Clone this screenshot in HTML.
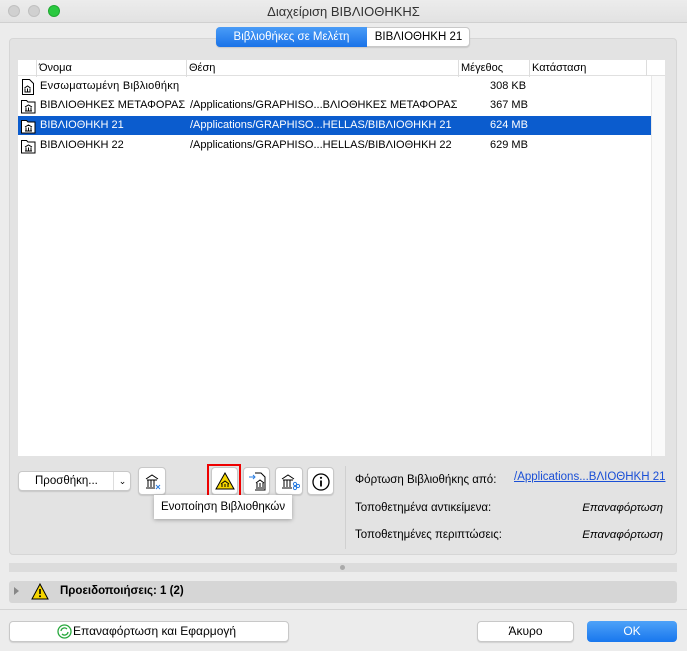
<!DOCTYPE html>
<html><head><meta charset="utf-8"><style>
*{box-sizing:border-box;margin:0;padding:0}
body{width:687px;height:651px;overflow:hidden;background:#ececec;font-family:"Liberation Sans","Noto Sans CJK JP",sans-serif;font-size:11.5px;color:#000;position:relative}
.a{position:absolute}
.btn{position:absolute;background:#fff;border:1px solid #c8c8c8;border-radius:4px;box-shadow:0 1px 1px rgba(0,0,0,.12)}
.row{position:absolute;left:18px;width:633px;height:19px;line-height:19px;font-size:11px}
.row span{position:absolute;white-space:nowrap}
.ic{position:absolute;left:3px;top:2px}
</style></head><body>
<div class="a" style="left:0;top:0;width:687px;height:23px;background:linear-gradient(#ececec,#e2e2e2);border-bottom:1px solid #d0d0d0"></div>
<div class="a" style="left:8px;top:5px;width:12px;height:12px;border-radius:6px;background:#d0d0d0;border:1px solid #c0c0c0"></div>
<div class="a" style="left:28px;top:5px;width:12px;height:12px;border-radius:6px;background:#d0d0d0;border:1px solid #c0c0c0"></div>
<div class="a" style="left:48px;top:5px;width:12px;height:12px;border-radius:6px;background:#2ac940;border:1px solid #20a832"></div>
<div class="a" style="left:0;top:4px;width:687px;text-align:center;font-size:13px;color:#333">Διαχείριση ΒΙΒΛΙΟΘΗΚΗΣ</div>
<div class="a" style="left:9px;top:38px;width:668px;height:517px;background:#e3e3e3;border:1px solid #d6d6d6;border-radius:4px"></div>
<div class="a" style="left:216px;top:27px;width:254px;height:20px;background:#fff;border:1px solid #c8c8c8;border-radius:4px;box-shadow:0 1px 1px rgba(0,0,0,.12)"></div>
<div class="a" style="left:216px;top:27px;width:151px;height:20px;background:linear-gradient(#4a9cf7,#1a73e8);border-radius:4px 0 0 4px;color:#fff;font-size:11.5px;line-height:20px;text-align:center">Βιβλιοθήκες σε Μελέτη</div>
<div class="a" style="left:367px;top:27px;width:103px;height:20px;font-size:11.5px;line-height:20px;text-align:center">ΒΙΒΛΙΟΘΗΚΗ 21</div>
<div class="a" style="left:18px;top:60px;width:647px;height:396px;background:#fff"></div>
<div class="a" style="left:651px;top:76px;width:14px;height:380px;background:#fafafa;border-left:1px solid #e8e8e8"></div>
<div class="a" style="left:18px;top:60px;width:647px;height:16px;border-bottom:1px solid #e0e0e0;font-size:11px;line-height:17px">
<span class="a" style="left:18px;border-left:1px solid #ddd;padding-left:2px">Όνομα</span>
<span class="a" style="left:168px;border-left:1px solid #ddd;padding-left:2px">Θέση</span>
<span class="a" style="left:440px;border-left:1px solid #ddd;padding-left:2px">Μέγεθος</span>
<span class="a" style="left:511px;border-left:1px solid #ddd;padding-left:2px">Κατάσταση</span>
<span class="a" style="left:628px;height:16px;border-left:1px solid #ddd"></span>
</div>
<svg width="0" height="0" style="position:absolute"><defs>
<g id="doc"><path d="M1.5 .5h7l4 4v11h-11z" fill="#fff" stroke="#000"/><path d="M3.5 9l3-2 3 2M4 9.5v3M6.5 9.5v3M9 9.5v3M3.5 13h6" stroke="#000" fill="none"/></g>
<g id="fold"><path d="M.5 2.5h5l1.5 1.5h7v11h-13.5z" fill="#fff" stroke="#000"/><path d="M4 9l3.5-2 3.5 2M5 9.5v3M7.5 9.5v3M10 9.5v3M4 13h7" stroke="#000" fill="none"/></g>
</defs></svg>
<div class="row" style="top:77px"><svg class="ic" width="14" height="16"><use href="#doc"/></svg><span style="left:22px;letter-spacing:.25px">Ενσωματωμένη Βιβλιοθήκη</span><span style="left:472px">308 KB</span></div>
<div class="row" style="top:96px"><svg class="ic" width="16" height="16"><use href="#fold"/></svg><span style="left:22px">ΒΙΒΛΙΟΘΗΚΕΣ ΜΕΤΑΦΟΡΑΣ</span><span style="left:172px">/Applications/GRAPHISO...ΒΛΙΟΘΗΚΕΣ ΜΕΤΑΦΟΡΑΣ</span><span style="left:472px">367 MB</span></div>
<div class="row" style="top:116px;background:#0b5cce;color:#fff"><svg class="ic" width="16" height="16"><use href="#fold"/></svg><span style="left:22px">ΒΙΒΛΙΟΘΗΚΗ 21</span><span style="left:172px">/Applications/GRAPHISO...HELLAS/ΒΙΒΛΙΟΘΗΚΗ 21</span><span style="left:472px">624 MB</span></div>
<div class="row" style="top:136px"><svg class="ic" width="16" height="16"><use href="#fold"/></svg><span style="left:22px">ΒΙΒΛΙΟΘΗΚΗ 22</span><span style="left:172px">/Applications/GRAPHISO...HELLAS/ΒΙΒΛΙΟΘΗΚΗ 22</span><span style="left:472px">629 MB</span></div>
<div class="btn" style="left:18px;top:471px;width:113px;height:20px"><span class="a" style="left:16px;top:3px">Προσθήκη...</span><span class="a" style="left:94px;top:0;height:18px;border-left:1px solid #ddd;width:18px;text-align:center;line-height:18px;font-size:9px">⌄</span></div>
<div class="btn" style="left:138px;top:467px;width:28px;height:28px"><svg class="a" style="left:5px;top:5px" width="18" height="18"><path d="M2 6l6-4 6 4M3 7h10M4 7v7M7 7v7M10 7v7M2 15h9" stroke="#000" fill="none"/><path d="M12 12l4 4M16 12l-4 4" stroke="#2a7de1"/></svg></div>
<div class="a" style="left:207px;top:464px;width:34px;height:34px;border:2px solid #e00"></div>
<div class="btn" style="left:211px;top:467px;width:27px;height:28px"><svg class="a" style="left:3px;top:4px" width="20" height="18"><path d="M10 1l9 16H1z" fill="#f5d500" stroke="#000"/><path d="M6 12l4-3 4 3M7 12v3M10 12v3M13 12v3" stroke="#000" fill="none"/></svg></div>
<div class="btn" style="left:243px;top:467px;width:27px;height:28px"><svg class="a" style="left:4px;top:4px" width="19" height="19"><path d="M7 1h6l4 4v13H7" fill="#fff" stroke="#000"/><path d="M1 5h6M5 3l2 2-2 2" stroke="#2a7de1" fill="none"/><path d="M8 11l4-3 4 3M9 11v4M12 11v4M15 11v4M8 16h8" stroke="#000" fill="none"/></svg></div>
<div class="btn" style="left:275px;top:467px;width:28px;height:28px"><svg class="a" style="left:5px;top:5px" width="19" height="18"><path d="M1 6l6-4 6 4M2 7h10M3 7v7M6 7v7M9 7v7M1 15h10" stroke="#000" fill="none"/><circle cx="14" cy="11" r="1.6" fill="none" stroke="#2a7de1"/><circle cx="17" cy="13" r="1.6" fill="none" stroke="#2a7de1"/><circle cx="14" cy="15" r="1.6" fill="none" stroke="#2a7de1"/></svg></div>
<div class="btn" style="left:307px;top:467px;width:27px;height:28px"><svg class="a" style="left:3px;top:4px" width="20" height="20"><circle cx="10" cy="10" r="8" fill="none" stroke="#000" stroke-width="1.3"/><path d="M10 8.5v6" stroke="#000" stroke-width="1.8"/><circle cx="10" cy="5.8" r="1.1"/></svg></div>
<div class="a" style="left:154px;top:495px;width:138px;height:24px;background:#fff;box-shadow:0 1px 4px rgba(0,0,0,.3);font-size:11.5px;line-height:24px;padding-left:7px;white-space:nowrap">Ενοποίηση Βιβλιοθηκών</div>
<div class="a" style="left:345px;top:466px;width:1px;height:83px;background:#d0d0d0"></div>
<div class="a" style="left:355px;top:474px">Φόρτωση Βιβλιοθήκης από:</div>
<div class="a" style="left:514px;top:471px;color:#1a4fd6;text-decoration:underline">/Applications...ΒΛΙΟΘΗΚΗ 21</div>
<div class="a" style="left:355px;top:502px">Τοποθετημένα αντικείμενα:</div>
<div class="a" style="right:24px;top:502px;font-style:italic">Επαναφόρτωση</div>
<div class="a" style="left:355px;top:529px">Τοποθετημένες περιπτώσεις:</div>
<div class="a" style="right:24px;top:529px;font-style:italic">Επαναφόρτωση</div>
<div class="a" style="left:9px;top:563px;width:668px;height:9px;background:#dcdcdc"></div>
<div class="a" style="left:340px;top:565px;width:5px;height:5px;border-radius:3px;background:#aaa"></div>
<div class="a" style="left:9px;top:581px;width:668px;height:22px;background:#d6d6d6;border-radius:3px"></div>
<div class="a" style="left:14px;top:587px;width:0;height:0;border-left:5px solid #888;border-top:4px solid transparent;border-bottom:4px solid transparent"></div>
<svg class="a" style="left:31px;top:583px" width="18" height="17"><path d="M9 1l8 15H1z" fill="#f5d500" stroke="#000"/><path d="M9 6v5" stroke="#000" stroke-width="1.6"/><circle cx="9" cy="13.3" r="1"/></svg>
<div class="a" style="left:60px;top:585px;font-weight:bold">Προειδοποιήσεις: 1 (2)</div>
<div class="a" style="left:0;top:609px;width:687px;height:1px;background:#d4d4d4"></div>
<div class="btn" style="left:9px;top:621px;width:280px;height:21px"></div>
<div class="a" style="left:73px;top:624px;font-size:12px">Επαναφόρτωση και Εφαρμογή</div>
<svg class="a" style="left:57px;top:624px" width="15" height="15"><circle cx="7.5" cy="7.5" r="6.5" fill="#fff" stroke="#27a83c" stroke-width="1.3"/><path d="M4 7a3.5 3.5 0 0 1 6-2M11 8a3.5 3.5 0 0 1-6 2" stroke="#27a83c" fill="none" stroke-width="1.3"/></svg>
<div class="btn" style="left:477px;top:621px;width:97px;height:21px;font-size:12px;line-height:19px;text-align:center">Άκυρο</div>
<div class="a" style="left:587px;top:621px;width:90px;height:21px;border-radius:4px;background:linear-gradient(#4ea2f8,#1877ee);color:#fff;font-size:12px;line-height:21px;text-align:center">OK</div>
</body></html>
